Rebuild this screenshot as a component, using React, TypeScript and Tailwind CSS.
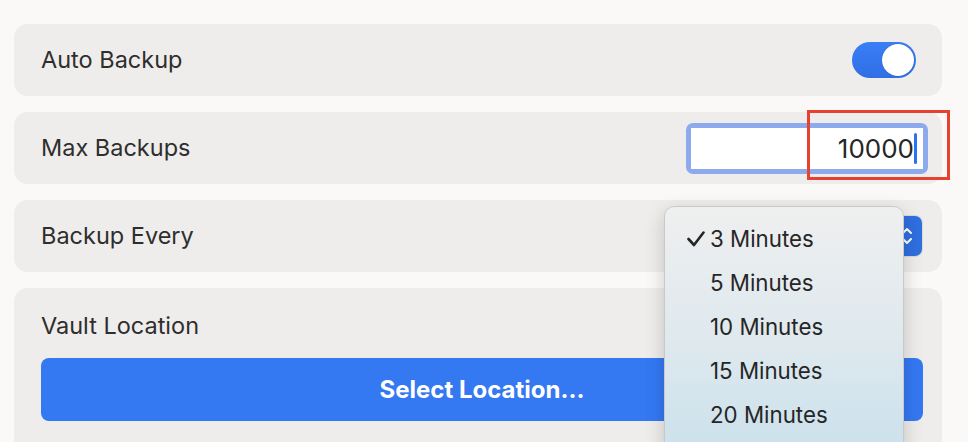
const font = { fontFamily: "Inter, 'Noto Sans', sans-serif" };

const Row = ({ children }: { children: React.ReactNode }) => (
  <div className="flex h-[72px] items-center justify-between rounded-[14px] bg-[#eeedeb] pl-[27px]">
    {children}
  </div>
);

const menuItems = ["3 Minutes", "5 Minutes", "10 Minutes", "15 Minutes", "20 Minutes"];

export default function App() {
  return (
    <div
      className="relative h-[442px] w-[968px] overflow-hidden bg-[#faf9f8] text-[#2e2e2e]"
      style={font}
    >
      <div className="flex flex-col gap-4 pl-[14px] pr-[26px] pt-6">
        <Row>
          <span className="text-[23.5px]">Auto Backup</span>
          <div className="mr-[26px] flex h-9 w-16 items-center justify-end rounded-full bg-gradient-to-b from-[#3a7ef5] to-[#2f6fe6] p-[2px]">
            <div className="h-8 w-8 rounded-full bg-white shadow-[0_0_1px_rgba(0,0,0,0.4)]" />
          </div>
        </Row>

        <Row>
          <span className="text-[23.5px]">Max Backups</span>
          <div className="mr-[14px] rounded-[7px] bg-[#8eaaef] p-[5px]">
            <div className="flex h-[41px] w-[232px] items-center justify-end bg-white pr-[6px] text-[26px] text-[#262626]">
              10000
              <span className="h-[31px] w-[3px] rounded-full bg-[#2f6ff0]" />
            </div>
          </div>
        </Row>

        <Row>
          <span className="text-[23.5px]">Backup Every</span>
          <div className="mr-[20px] flex h-10 w-[30px] items-center justify-center rounded-[7px] bg-[#2f6fe0] shadow-[0_0_0_1px_rgba(0,0,0,0.08)]">
            <svg width="12" height="22" viewBox="0 0 12 22" fill="none" stroke="white" strokeWidth="2" strokeLinecap="round" strokeLinejoin="round">
              <path d="M2 8 L6 4 L10 8" />
              <path d="M2 14 L6 18 L10 14" />
            </svg>
          </div>
        </Row>

        <div className="h-[200px] rounded-[14px] bg-[#eeedeb] px-[27px] pr-[19px] pt-[24px]">
          <div className="text-[23.5px] leading-[28px]">Vault Location</div>
          <button className="mt-[18px] flex h-[63px] w-full items-center justify-center rounded-[8px] bg-[#3478f2] text-[24px] font-bold text-white">
            Select Location...
          </button>
        </div>
      </div>

      {/* red highlight */}
      <div className="absolute left-[807px] top-[110px] h-[70px] w-[143px] border-[3px] border-[#e5432f]" />

      {/* dropdown menu */}
      <div className="absolute left-[664px] top-[206px] h-[260px] w-[240px] rounded-[10px] border border-[#c9c9c9] bg-gradient-to-b from-[#efefef] via-[#dfe9ee] to-[#c9e0ec] pt-[10px] shadow-[0_6px_20px_rgba(0,0,0,0.18)]">
        {menuItems.map((item, i) => (
          <div key={item} className="flex h-[44px] items-center text-[22.3px] text-[#262626]">
            <span className="flex w-[45px] justify-end pr-[5px]">
              {i === 0 && (
                <svg width="18" height="16" viewBox="0 0 18 16" fill="none" stroke="#262626" strokeWidth="2.6" strokeLinecap="round" strokeLinejoin="round">
                  <path d="M1.5 8 L7 14 L16.5 1.5" />
                </svg>
              )}
            </span>
            {item}
          </div>
        ))}
      </div>
    </div>
  );
}
